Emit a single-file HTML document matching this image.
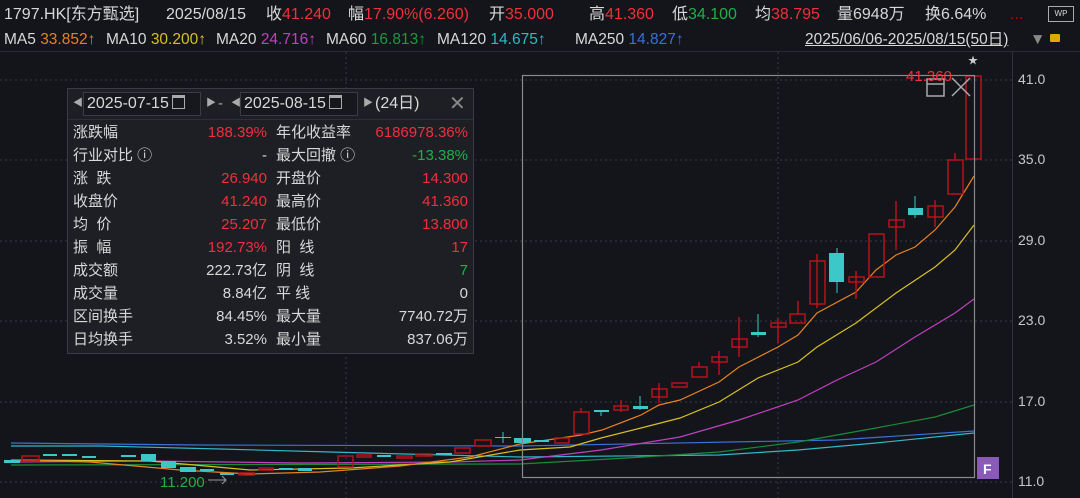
<!DOCTYPE html>
<html><head><meta charset="utf-8"><style>
html,body{margin:0;padding:0;background:#13151a;width:1080px;height:498px;overflow:hidden;font-family:"Liberation Sans","Noto Sans CJK SC",sans-serif;color:#d8d8d8}
.r{color:#f0303a}.g{color:#1fb04a}
#top{position:absolute;left:0;top:0;width:1080px;height:28px;font-size:16px;line-height:30px;white-space:nowrap}
#ma{position:absolute;left:0;top:29px;width:1080px;height:22px;font-size:15.5px;line-height:22px;white-space:nowrap;border-bottom:1px solid #2a2c33}
#box{position:absolute;left:67px;top:88px;width:405px;height:264px;background:#1e1f25;border:1px solid #3a3c44;font-size:15px}
#box .hd{height:30px;line-height:30px;position:relative}
.row{position:absolute;height:23px;line-height:23px}
.ax{position:absolute;left:1018px;font-size:14px;color:#c8c8c8}
.cal{display:inline-block;width:11px;height:10px;border:1px solid #aaa;border-top-width:3px;margin-left:3px;vertical-align:-1px}
</style></head><body>
<div id="top">
<span style="position:absolute;left:4px">1797.HK[东方甄选]</span>
<span style="position:absolute;left:166px">2025/08/15</span>
<span style="position:absolute;left:266px">收<span class="r">41.240</span></span>
<span style="position:absolute;left:348px">幅<span class="r">17.90%(6.260)</span></span>
<span style="position:absolute;left:489px">开<span class="r">35.000</span></span>
<span style="position:absolute;left:589px">高<span class="r">41.360</span></span>
<span style="position:absolute;left:672px">低<span class="g">34.100</span></span>
<span style="position:absolute;left:755px">均<span class="r">38.795</span></span>
<span style="position:absolute;left:837px">量6948万</span>
<span style="position:absolute;left:925px">换6.64%</span>
<span style="position:absolute;left:1010px;color:#c00">...</span>
<span style="position:absolute;left:1048px;top:6px;width:24px;height:14px;border:1px solid #aaa;font-size:8px;line-height:14px;text-align:center">WP</span>
</div>
<div id="ma">
<span style="position:absolute;left:4px">MA5 <span style="color:#e8821e">33.852↑</span></span>
<span style="position:absolute;left:106px">MA10 <span style="color:#d8c020">30.200↑</span></span>
<span style="position:absolute;left:216px">MA20 <span style="color:#c040c0">24.716↑</span></span>
<span style="position:absolute;left:326px">MA60 <span style="color:#1a9a40">16.813↑</span></span>
<span style="position:absolute;left:437px">MA120 <span style="color:#30b8c8">14.675↑</span></span>
<span style="position:absolute;left:575px">MA250 <span style="color:#3a70d8">14.827↑</span></span>
<span style="position:absolute;left:805px;text-decoration:underline">2025/06/06-2025/08/15(50日)</span>
<span style="position:absolute;left:1030px;color:#888">▼</span>
<span style="position:absolute;left:1050px;top:5px;width:10px;height:8px;background:#e0a800;border-radius:1px"></span>
</div>
<svg width="1080" height="498" style="position:absolute;left:0;top:0" xmlns="http://www.w3.org/2000/svg">
<g stroke="#3a3c44" stroke-dasharray="2,3" stroke-width="1">
<line x1="0" y1="80" x2="1012" y2="80"/><line x1="0" y1="160" x2="1012" y2="160"/><line x1="0" y1="241" x2="1012" y2="241"/><line x1="0" y1="321" x2="1012" y2="321"/><line x1="0" y1="402" x2="1012" y2="402"/><line x1="0" y1="482" x2="1012" y2="482"/>
<line x1="346" y1="52" x2="346" y2="498"/><line x1="778" y1="52" x2="778" y2="498"/>
</g>
<line x1="1012.5" y1="52" x2="1012.5" y2="498" stroke="#30323a"/>
<g fill="none" stroke-width="1.2">
<polyline stroke="#3a70d8" points="11,443 200,445 520,446 837,440 974,431"/>
<polyline stroke="#30b8c8" points="11,446 100,446 220,449 330,452 520,457 719,455 798,450 876,443 974,433"/>
<polyline stroke="#1a8a3a" points="11,465 520,464 627,458 719,452 798,442 876,428 935,417 974,405"/>
<polyline stroke="#c040c0" points="11,462 150,461 300,463 450,462 520,460 601,450 680,437 739,420 798,400 837,380 876,362 915,337 955,313 974,299"/>
<polyline stroke="#d8c020" points="11,460 150,461 250,470 350,468 450,462 520,450 570,447 601,438 641,428 680,418 719,402 758,378 798,362 817,347 856,323 896,293 935,267 955,250 974,225"/>
<polyline stroke="#e8821e" points="11,460 90,462 180,470 250,474 320,472 400,466 470,457 520,444 581,435 602,430 641,415 659,405 680,400 719,382 739,367 778,347 798,335 817,313 856,292 876,270 896,255 915,247 935,230 955,207 974,176"/>
</g>
<g fill="#3cc8c8">
<rect x="4" y="460" width="16" height="3"/><rect x="43" y="454" width="14" height="2"/><rect x="62" y="454" width="15" height="2"/><rect x="82" y="456" width="14" height="2"/><rect x="121" y="455" width="15" height="2"/><rect x="141" y="454" width="15" height="7"/><rect x="161" y="461" width="15" height="7"/><rect x="180" y="467" width="16" height="5"/><rect x="200" y="469" width="14" height="2"/><rect x="220" y="473" width="14" height="2"/><rect x="279" y="468" width="14" height="2"/><rect x="298" y="468" width="14" height="3"/><rect x="377" y="455" width="14" height="2"/><rect x="436" y="453" width="16" height="2"/><rect x="495" y="437" width="16" height="1"/><rect x="514" y="438" width="15" height="5"/>
<rect x="517" y="438" width="14" height="4"/><rect x="534" y="440" width="15" height="2"/><rect x="594" y="410" width="15" height="2"/><rect x="633" y="406" width="15" height="3"/><rect x="751" y="332" width="15" height="3"/><rect x="829" y="253" width="15" height="29"/><rect x="908" y="208" width="15" height="7"/>
</g>
<g stroke="#3cc8c8" stroke-width="1">
<line x1="640" y1="396" x2="640" y2="410"/><line x1="758" y1="314" x2="758" y2="337"/><line x1="837" y1="248" x2="837" y2="293"/><line x1="915" y1="196" x2="915" y2="218"/><line x1="601" y1="410" x2="601" y2="416"/><line x1="503" y1="432" x2="503" y2="443"/>
</g>
<g fill="none" stroke="#b8121c" stroke-width="1.5">
<rect x="22" y="456" width="17" height="5"/><rect x="239" y="473" width="15" height="2"/><rect x="259" y="468" width="14" height="2"/><rect x="338" y="456" width="15" height="11"/><rect x="357" y="455" width="14" height="2"/><rect x="397" y="456" width="15" height="2"/><rect x="416" y="454" width="16" height="2"/><rect x="455" y="448" width="15" height="5"/><rect x="475" y="440" width="16" height="6"/>
<rect x="555" y="438" width="14" height="5"/><rect x="574" y="412" width="15" height="22"/><rect x="614" y="406" width="14" height="4"/><rect x="652" y="389" width="15" height="8"/><rect x="672" y="383" width="15" height="4"/><rect x="692" y="367" width="15" height="10"/><rect x="712" y="357" width="15" height="5"/><rect x="732" y="339" width="15" height="8"/><rect x="771" y="323" width="15" height="4"/><rect x="790" y="314" width="15" height="9"/><rect x="810" y="261" width="15" height="43"/><rect x="849" y="277" width="15" height="5"/><rect x="869" y="234" width="15" height="43"/><rect x="889" y="220" width="15" height="7"/><rect x="928" y="206" width="15" height="11"/><rect x="948" y="160" width="15" height="34"/><rect x="966" y="76" width="15" height="83"/>
<line x1="581" y1="408" x2="581" y2="412"/><line x1="621" y1="400" x2="621" y2="412"/><line x1="659" y1="383" x2="659" y2="403"/><line x1="699" y1="362" x2="699" y2="367"/><line x1="719" y1="351" x2="719" y2="375"/><line x1="739" y1="317" x2="739" y2="357"/><line x1="778" y1="318" x2="778" y2="343"/><line x1="798" y1="301" x2="798" y2="314"/><line x1="817" y1="254" x2="817" y2="308"/><line x1="856" y1="271" x2="856" y2="299"/><line x1="896" y1="201" x2="896" y2="250"/><line x1="935" y1="200" x2="935" y2="227"/><line x1="955" y1="153" x2="955" y2="160"/>
</g>
<rect x="522.5" y="75.5" width="452" height="402" fill="none" stroke="#8a8a8a" stroke-width="1.2"/>
<rect x="927" y="79" width="17" height="17" fill="none" stroke="#aaa" stroke-width="1.5"/><line x1="927" y1="84" x2="944" y2="84" stroke="#aaa" stroke-width="1.5"/>
<path d="M952 78 L970 96 M970 78 L952 96" stroke="#aaa" stroke-width="1.5"/>
<text x="906" y="81" fill="#f0303a" font-size="15" font-family="Liberation Sans">41.360</text>
<text x="968" y="64" fill="#ccc" font-size="10">★</text>
<rect x="977" y="457" width="22" height="22" fill="#8a5ab8"/><text x="983" y="474" fill="#fff" font-size="14" font-weight="bold" font-family="Liberation Sans">F</text>
<text x="160" y="487" fill="#1fb04a" font-size="15" font-family="Liberation Sans">11.200</text>
<path d="M208 480 L226 480 M222 476 L226 480 L222 484" stroke="#999" fill="none"/>
</svg>
<div class="ax" style="top:71px">41.0</div><div class="ax" style="top:151px">35.0</div><div class="ax" style="top:232px">29.0</div><div class="ax" style="top:312px">23.0</div><div class="ax" style="top:393px">17.0</div><div class="ax" style="top:473px">11.0</div>
<div id="box">
<div class="hd">
<span style="position:absolute;left:5px;color:#aaa;font-size:10px">◀</span>
<span style="position:absolute;left:15px;top:3px;height:22px;line-height:22px;border:1px solid #3a3c44;background:#17181d;padding:0 3px;width:110px;font-size:16px">2025-07-15<span class="cal"></span></span>
<span style="position:absolute;left:138px;color:#aaa;font-size:10px">▶</span>
<span style="position:absolute;left:150px;color:#aaa">-</span>
<span style="position:absolute;left:163px;color:#aaa;font-size:10px">◀</span>
<span style="position:absolute;left:172px;top:3px;height:22px;line-height:22px;border:1px solid #3a3c44;background:#17181d;padding:0 3px;width:110px;font-size:16px">2025-08-15<span class="cal"></span></span>
<span style="position:absolute;left:295px;color:#aaa;font-size:10px">▶</span>
<span style="position:absolute;left:307px;font-size:16px">(24日)</span>
<span style="position:absolute;left:381px;color:#888;font-size:20px">✕</span>
</div>
<div style="position:absolute;left:0;top:30px;width:405px;height:1px;background:#2e3038"></div>
<div class="row" style="top:32px;left:5px;width:395px">
<div style="position:absolute;left:0;top:0">涨跌幅<br>行业对比 ⓘ<br>涨&nbsp;&nbsp;跌<br>收盘价<br>均&nbsp;&nbsp;价<br>振&nbsp;&nbsp;幅<br>成交额<br>成交量<br>区间换手<br>日均换手</div>
<div style="position:absolute;right:201px;top:0;text-align:right;line-height:23px"><span class="r">188.39%</span><br>-<br><span class="r">26.940</span><br><span class="r">41.240</span><br><span class="r">25.207</span><br><span class="r">192.73%</span><br>222.73亿<br>8.84亿<br>84.45%<br>3.52%</div>
<div style="position:absolute;left:203px;top:0;line-height:23px">年化收益率<br>最大回撤 ⓘ<br>开盘价<br>最高价<br>最低价<br>阳&nbsp;&nbsp;线<br>阴&nbsp;&nbsp;线<br>平&nbsp;线<br>最大量<br>最小量</div>
<div style="position:absolute;right:0;top:0;text-align:right;line-height:23px"><span class="r">6186978.36%</span><br><span class="g">-13.38%</span><br><span class="r">14.300</span><br><span class="r">41.360</span><br><span class="r">13.800</span><br><span class="r">17</span><br><span class="g">7</span><br>0<br>7740.72万<br>837.06万</div>
</div>
</div>
</body></html>
